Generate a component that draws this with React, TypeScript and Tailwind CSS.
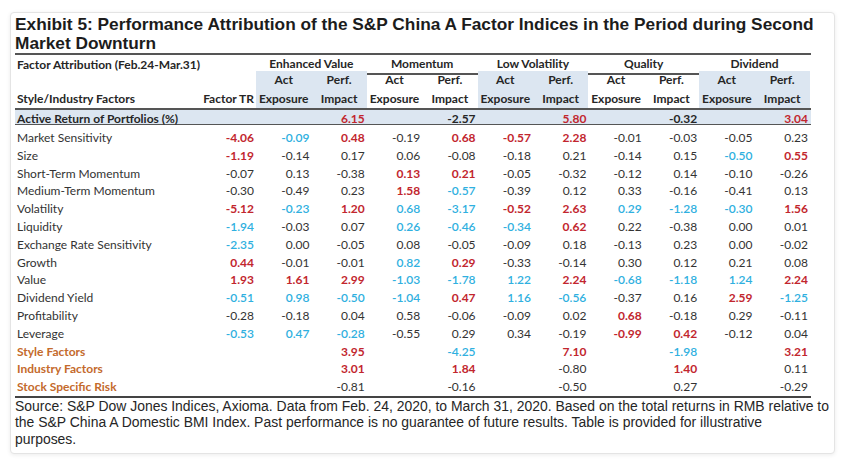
type Tone = "r" | "b" | "n";
type Cell = [string, Tone];

const GROUPS = ["Enhanced Value", "Momentum", "Low Volatility", "Quality", "Dividend"];

const c = (v: string, t: Tone = "n"): Cell => [v, t];

const ROWS: { label: string; cells: Cell[] }[] = [
  { label: "Market Sensitivity", cells: [c("-4.06", "r"), c("-0.09", "b"), c("0.48", "r"), c("-0.19"), c("0.68", "r"), c("-0.57", "r"), c("2.28", "r"), c("-0.01"), c("-0.03"), c("-0.05"), c("0.23")] },
  { label: "Size", cells: [c("-1.19", "r"), c("-0.14"), c("0.17"), c("0.06"), c("-0.08"), c("-0.18"), c("0.21"), c("-0.14"), c("0.15"), c("-0.50", "b"), c("0.55", "r")] },
  { label: "Short-Term Momentum", cells: [c("-0.07"), c("0.13"), c("-0.38"), c("0.13", "r"), c("0.21", "r"), c("-0.05"), c("-0.32"), c("-0.12"), c("0.14"), c("-0.10"), c("-0.26")] },
  { label: "Medium-Term Momentum", cells: [c("-0.30"), c("-0.49"), c("0.23"), c("1.58", "r"), c("-0.57", "b"), c("-0.39"), c("0.12"), c("0.33"), c("-0.16"), c("-0.41"), c("0.13")] },
  { label: "Volatility", cells: [c("-5.12", "r"), c("-0.23", "b"), c("1.20", "r"), c("0.68", "b"), c("-3.17", "b"), c("-0.52", "r"), c("2.63", "r"), c("0.29", "b"), c("-1.28", "b"), c("-0.30", "b"), c("1.56", "r")] },
  { label: "Liquidity", cells: [c("-1.94", "b"), c("-0.03"), c("0.07"), c("0.26", "b"), c("-0.46", "b"), c("-0.34", "b"), c("0.62", "r"), c("0.22"), c("-0.38"), c("0.00"), c("0.01")] },
  { label: "Exchange Rate Sensitivity", cells: [c("-2.35", "b"), c("0.00"), c("-0.05"), c("0.08"), c("-0.05"), c("-0.09"), c("0.18"), c("-0.13"), c("0.23"), c("0.00"), c("-0.02")] },
  { label: "Growth", cells: [c("0.44", "r"), c("-0.01"), c("-0.01"), c("0.82", "b"), c("0.29", "r"), c("-0.33"), c("-0.14"), c("0.30"), c("0.12"), c("0.21"), c("0.08")] },
  { label: "Value", cells: [c("1.93", "r"), c("1.61", "r"), c("2.99", "r"), c("-1.03", "b"), c("-1.78", "b"), c("1.22", "b"), c("2.24", "r"), c("-0.68", "b"), c("-1.18", "b"), c("1.24", "b"), c("2.24", "r")] },
  { label: "Dividend Yield", cells: [c("-0.51", "b"), c("0.98", "b"), c("-0.50", "b"), c("-1.04", "b"), c("0.47", "r"), c("1.16", "b"), c("-0.56", "b"), c("-0.37"), c("0.16"), c("2.59", "r"), c("-1.25", "b")] },
  { label: "Profitability", cells: [c("-0.28"), c("-0.18"), c("0.04"), c("0.58"), c("-0.06"), c("-0.09"), c("0.02"), c("0.68", "r"), c("-0.18"), c("0.29"), c("-0.11")] },
  { label: "Leverage", cells: [c("-0.53", "b"), c("0.47", "b"), c("-0.28", "b"), c("-0.55"), c("0.29"), c("0.34"), c("-0.19"), c("-0.99", "r"), c("0.42", "r"), c("-0.12"), c("0.04")] },
];

const SUMMARY: { label: string; perf: Cell[] }[] = [
  { label: "Style Factors", perf: [c("3.95", "r"), c("-4.25", "b"), c("7.10", "r"), c("-1.98", "b"), c("3.21", "r")] },
  { label: "Industry Factors", perf: [c("3.01", "r"), c("1.84", "r"), c("-0.80"), c("1.40", "r"), c("0.11")] },
  { label: "Stock Specific Risk", perf: [c("-0.81"), c("-0.16"), c("-0.50"), c("0.27"), c("-0.29")] },
];

const ACTIVE: Cell[] = [c("6.15", "r"), c("-2.57"), c("5.80", "r"), c("-0.32"), c("3.04", "r")];

const GRID = "grid grid-cols-[185px_56px_repeat(10,55.4px)]";

function Num({ cell }: { cell: Cell }) {
  const [v, t] = cell;
  const cls =
    t === "r"
      ? "text-[#c2262e] font-bold"
      : t === "b"
        ? "text-[#2fb0e0] font-semibold"
        : "text-[#333333]";
  return <div className={`text-right pr-[2px] ${cls}`}>{v}</div>;
}

export default function App() {
  return (
    <div className="w-[845px] h-[468px] bg-white pt-[12px] pl-[10px]">
      <div className="w-[825px] h-[442px] bg-white border border-[#e4e4e4] rounded-[4px] shadow-[0_1px_4px_rgba(0,0,0,0.08)] pl-[4px] pt-[2px]">
        <h1 className="font-['Liberation_Sans',Arial,sans-serif] font-bold text-[17.3px] leading-[18.5px] text-[#1c1c1c]">
          Exhibit 5: Performance Attribution of the S&amp;P China A Factor Indices in the Period during Second Market Downturn
        </h1>

        <div className="w-[795.5px] mt-[1px] font-['Lato',sans-serif] text-[12px] text-[#333333] border-t-2 border-[#555555]">
          {/* group header */}
          <div className={`${GRID} h-[16px] items-center font-bold text-[#262626]`}>
            <div className="col-span-2 pl-[2px]">Factor Attribution (Feb.24-Mar.31)</div>
            {GROUPS.map((g) => (
              <div key={g} className="col-span-2 h-full flex items-center justify-center border-b-2 border-[#555555]">
                {g}
              </div>
            ))}
          </div>
          {/* sub headers */}
          <div className={`${GRID} font-bold text-[#262626]`}>
            <div className="h-[18.5px]" />
            <div />
            {GROUPS.map((g, i) => (
              <div key={g} className={`col-span-2 grid grid-cols-2 ${i % 2 === 0 ? "bg-[#dce6f1]" : ""}`}>
                <div className="h-[18.5px] flex items-center justify-center">Act</div>
                <div className="h-[18.5px] flex items-center justify-center">Perf.</div>
              </div>
            ))}
            <div className="h-[18.5px] flex items-center pl-[2px]">Style/Industry Factors</div>
            <div className="flex items-center justify-end pr-[2px]">Factor TR</div>
            {GROUPS.map((g, i) => (
              <div key={g} className={`col-span-2 grid grid-cols-2 ${i % 2 === 0 ? "bg-[#dce6f1]" : ""}`}>
                <div className="h-[18.5px] flex items-center justify-center">Exposure</div>
                <div className="h-[18.5px] flex items-center justify-center">Impact</div>
              </div>
            ))}
          </div>

          {/* active return */}
          <div className={`${GRID} h-[17px] items-center bg-[#dce6f1] border-t-2 border-b border-[#555555] font-bold text-[#262626]`}>
            <div className="pl-[2px]">Active Return of Portfolios (%)</div>
            <div />
            {ACTIVE.map((p, i) => [
              <div key={`a${i}`} />,
              <div key={`p${i}`} className={`text-right pr-[2px] ${p[1] === "r" ? "text-[#c2262e]" : "text-[#262626]"}`}>
                {p[0]}
              </div>,
            ])}
          </div>

          <div className="pt-[4px] border-b-2 border-[#444444]">
            {ROWS.map((r) => (
              <div key={r.label} className={`${GRID} h-[17.8px] items-center`}>
                <div className="pl-[2px] text-[#333333]">{r.label}</div>
                {r.cells.map((cell, i) => (
                  <Num key={i} cell={cell} />
                ))}
              </div>
            ))}
            {SUMMARY.map((s) => (
              <div key={s.label} className={`${GRID} h-[17.8px] items-center`}>
                <div className="pl-[2px] font-bold text-[#c46a2c]">{s.label}</div>
                <div />
                {s.perf.map((p, i) => [<div key={`a${i}`} />, <Num key={`p${i}`} cell={p} />])}
              </div>
            ))}
          </div>
        </div>

        <p className="font-['Liberation_Sans',Arial,sans-serif] text-[13.95px] leading-[16.5px] text-[#262626]">
          Source: S&amp;P Dow Jones Indices, Axioma. Data from Feb. 24, 2020, to March 31, 2020. Based on the total returns in RMB relative to the S&amp;P China A Domestic BMI Index. Past performance is no guarantee of future results. Table is provided for illustrative
          <br />
          purposes.
        </p>
      </div>
    </div>
  );
}
